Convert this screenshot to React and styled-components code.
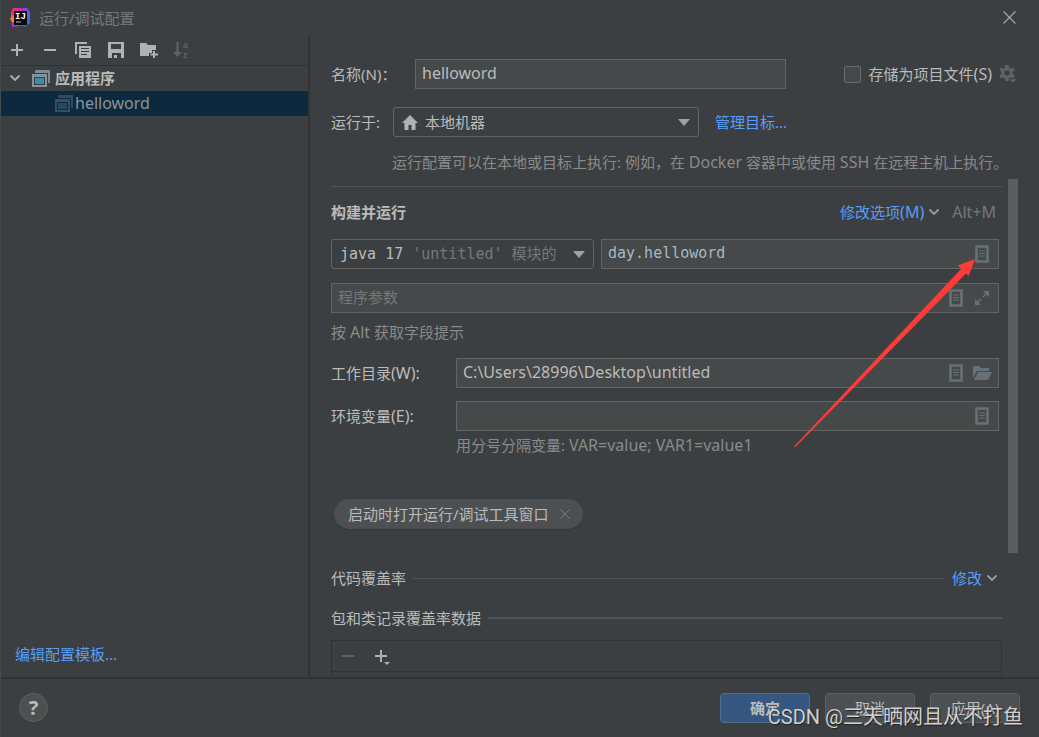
import React from "react";
import styled, { createGlobalStyle, css } from "styled-components";

const sans = `"Noto Sans", "Noto Sans CJK SC", sans-serif`;
const mono = `"DejaVu Sans Mono", "Noto Sans CJK SC", monospace`;
const c = {
  bg: "#3c3f41",
  field: "#45494a",
  line: "#323232",
  border: "#646464",
  rule: "#515456",
  text: "#bbbbbb",
  dim: "#8a8a8a",
  faint: "#777777",
  link: "#589df6",
  icon: "#afb1b3",
  fieldIcon: "#667177",
};

const GlobalStyle = createGlobalStyle`
  *, *::before, *::after { box-sizing: border-box; }
  body { margin: 0; background: ${c.bg}; color: ${c.text}; font: 15px/20px ${sans}; }
  button, input, select { font: inherit; color: inherit; margin: 0; }
  svg { display: block; flex: none; }
`;

const Dialog = styled.div`
  position: relative;
  display: flex;
  flex-direction: column;
  height: 100vh;
  overflow: hidden;
  background: ${c.bg};
  border-left: 1px solid #46494b;
  white-space: nowrap;
`;
const TitleBar = styled.header`
  display: flex;
  align-items: center;
  flex: none;
  height: 35px;
  padding: 0 20px 0 9px;
  color: ${c.faint};
`;
const TitleText = styled.h1`
  flex: 1;
  margin: 0 0 0 8px;
  font-size: 15px;
  font-weight: 400;
`;
const Latin = styled.span`
  font-size: 16px;
  line-height: 1;
`;
const IconButton = styled.button`
  display: flex;
  align-items: center;
  justify-content: center;
  flex: none;
  width: 20px;
  height: 20px;
  padding: 0;
  border: 0;
  background: none;
`;
const Body = styled.div`
  display: flex;
  flex: 1;
  min-height: 0;
`;
const Sidebar = styled.aside`
  display: flex;
  flex-direction: column;
  flex: 0 0 309px;
  border-right: 2px solid ${c.line};
`;
const Toolbar = styled.div`
  display: flex;
  align-items: center;
  gap: 13px;
  flex: none;
  height: 31px;
  padding-left: 6px;
  border-bottom: 1px solid ${c.line};
`;
const Tree = styled.ul`
  flex: 1;
  margin: 0;
  padding: 0;
  list-style: none;
`;
const TreeRow = styled.li`
  display: flex;
  align-items: center;
  height: 25px;
  padding-bottom: 1px;
  padding-left: ${(p) => (p.$child ? 54 : 8)}px;
  gap: ${(p) => (p.$child ? 2 : 5)}px;
  font-weight: ${(p) => (p.$child ? 400 : 700)};
  color: ${(p) => (p.$child ? "#8b949b" : c.text)};
  background: ${(p) => (p.$child ? "#0d293e" : "none")};
`;
const ChevronSlot = styled.span`
  width: 18px;
`;
const Link = styled.a`
  color: ${c.link};
  text-decoration: none;
`;
const SidebarFoot = styled.div`
  padding: 0 14px 13px;
`;

const Main = styled.main`
  display: flex;
  flex-direction: column;
  flex: 1;
  min-width: 0;
  padding: 24px 21px 0;
`;
const NameRow = styled.div`
  display: flex;
  align-items: center;
  flex: none;
`;
const Label = styled.label`
  flex: none;
  width: ${(p) => p.$width}px;
`;
const fieldBox = css`
  height: 30px;
  border: 1px solid ${c.border};
`;
const Field = styled.div`
  ${fieldBox}
  display: flex;
  align-items: center;
  flex: 1;
  gap: 6px;
  min-width: 0;
  padding: 0 6px;
  background: ${c.field};
`;
const Input = styled.input`
  flex: 1;
  min-width: 0;
  height: 28px;
  padding: 0 0 2px;
  border: 0;
  outline: 0;
  background: none;
  color: ${(p) => (p.$mono ? "#a9b7c6" : c.text)};
  font-family: ${(p) => (p.$mono ? mono : sans)};
  font-size: ${(p) => (p.$mono ? 15 : 16)}px;
  &::placeholder { color: ${c.faint}; opacity: 1; font-size: 15px; }
`;
const StoreLabel = styled.label`
  display: flex;
  align-items: center;
  gap: 8px;
  margin: 0 6px 0 58px;
`;
const Checkbox = styled.input`
  appearance: none;
  width: 17px;
  height: 17px;
  border: 1px solid #6b6b6b;
  border-radius: 2px;
  background: #43494a;
`;
const TargetRow = styled.div`
  display: flex;
  align-items: center;
  flex: none;
  margin-top: 18px;
`;
const Combo = styled.div`
  position: relative;
  flex: none;
  width: ${(p) => p.$width}px;
  margin-right: ${(p) => p.$gap}px;
`;
const Select = styled.select`
  ${fieldBox}
  appearance: none;
  width: 100%;
  padding: 0 30px 0 ${(p) => (p.$icon ? 31 : 8)}px;
  border-radius: 3px;
  background: ${c.bg};
  font-family: ${(p) => (p.$rich ? mono : sans)};
  color: ${(p) => (p.$rich ? "transparent" : c.text)};
  option { color: ${c.text}; }
`;
const ComboOverlay = styled.span`
  position: absolute;
  inset: 0;
  display: flex;
  align-items: center;
  justify-content: space-between;
  padding: 0 9px;
  pointer-events: none;
  font-family: ${mono};
`;
const Muted = styled.span`
  color: ${c.faint};
`;
const Hint = styled.p`
  flex: none;
  margin: ${(p) => p.$top}px 0 0 ${(p) => p.$indent || 0}px;
  color: ${c.dim};
`;

const ScrollPane = styled.div`
  display: flex;
  gap: 6px;
  flex: 1;
  min-height: 0;
  margin-top: 7px;
  overflow: hidden;
`;
const Content = styled.div`
  flex: 1;
  min-width: 0;
`;
const Thumb = styled.div`
  flex: none;
  width: 10px;
  height: 75%;
  background: #5b5d5e;
`;
const Separator = styled.hr`
  height: 1px;
  margin: 7px 0 15px;
  border: 0;
  background: ${c.rule};
`;
const SectionHead = styled.div`
  display: flex;
  align-items: center;
  padding-right: 6px;
`;
const SectionTitle = styled.h2`
  flex: 1;
  margin: 0;
  font-size: 15px;
  font-weight: 700;
`;
const Shortcut = styled(Latin)`
  margin-left: 12px;
  color: ${c.faint};
`;
const MenuLink = styled(Link)`
  display: flex;
  align-items: center;
  gap: 4px;
`;
const FormRow = styled.div`
  display: flex;
  align-items: center;
  margin-top: ${(p) => p.$top}px;
  padding-right: 3px;
`;
const Chip = styled.span`
  display: inline-flex;
  align-items: center;
  gap: 6px;
  height: 30px;
  margin: 44px 0 0 3px;
  padding: 0 8px 0 14px;
  border-radius: 15px;
  background: #4c5052;
  box-shadow: 0 1px 1px #35383a;
`;
const Group = styled.div`
  display: flex;
  align-items: center;
  gap: 7px;
  margin-top: ${(p) => p.$top}px;
  padding-right: ${(p) => (p.$link ? 4 : 0)}px;
`;
const GroupLine = styled.span`
  flex: 1;
  height: ${(p) => p.$weight}px;
  background: ${c.rule};
`;
const ListBox = styled.div`
  height: 120px;
  margin-top: 12px;
  border: 1px solid ${c.line};
`;

const Footer = styled.footer`
  display: flex;
  align-items: center;
  gap: 15px;
  flex: none;
  height: 60px;
  padding: 0 19px 1px 18px;
  border-top: 2px solid ${c.line};
`;
const HelpButton = styled.button`
  width: 29px;
  height: 29px;
  margin-right: auto;
  padding: 0;
  border: 1px solid #5e6060;
  border-radius: 50%;
  background: #4c5052;
  font-size: 20px;
  font-weight: 700;
`;
const Button = styled.button`
  width: 90px;
  height: 30px;
  padding: 0;
  border: 1px solid ${(p) => (p.$primary ? "#4c708c" : "#5e6060")};
  border-radius: 4px;
  background: ${(p) => (p.$primary ? "#365880" : "#4c5052")};
  font-weight: ${(p) => (p.$primary ? 700 : 400)};
`;
const Watermark = styled.div`
  position: absolute;
  right: 16px;
  bottom: 8px;
  font: 20px/24px Roboto, "Noto Sans CJK SC", sans-serif;
  color: #d0d0d0;
  text-shadow: 1px 1px 1px #222;
  pointer-events: none;
`;
const Arrow = styled.svg`
  position: absolute;
  top: 257px;
  right: 62px;
  pointer-events: none;
`;

const Logo = () => (
  <svg width="21" height="20" viewBox="0 0 21 20">
    <defs>
      <linearGradient id="warm" x1="0" y1="1" x2="1" y2="0">
        <stop offset="0" stopColor="#f97a12" />
        <stop offset="0.4" stopColor="#fe2857" />
        <stop offset="1" stopColor="#b82de0" />
      </linearGradient>
      <linearGradient id="cool" x1="0" y1="0" x2="0" y2="1">
        <stop offset="0" stopColor="#7a4be0" />
        <stop offset="1" stopColor="#087cfa" />
      </linearGradient>
    </defs>
    <path d="M13 0h4l3 4v11l-5 4-5-2V5z" fill="url(#cool)" />
    <path d="M3 0h8l4 4-5 9-6 1-3-2V5z" fill="url(#warm)" />
    <path d="M0 10l4-2v6l-2 1z" fill="#fc801d" />
    <path d="M2 15l5-2 5 4-2 1-8 1z" fill="#a33bd8" />
    <rect x="4" y="3" width="13" height="14" fill="#090909" />
    <text x="5" y="11" fill="#fff" fontSize="9" fontWeight="700" fontFamily="Liberation Mono">IJ</text>
    <path d="M6 14h5" stroke="#bbb" strokeWidth="1" />
  </svg>
);
const Close = ({ size, color }) => (
  <svg width={size} height={size} viewBox="0 0 12 12">
    <path d="M.5.5l11 11M11.5.5l-11 11" stroke={color} strokeWidth="1.2" />
  </svg>
);
const Plus = () => (
  <svg width="14" height="14"><path d="M7 1v12M1 7h12" stroke={c.icon} strokeWidth="2" /></svg>
);
const Minus = ({ color = c.icon }) => (
  <svg width="14" height="14"><path d="M1 7h12" stroke={color} strokeWidth="2" /></svg>
);
const Copy = () => (
  <svg width="16" height="16" viewBox="0 0 16 16">
    <path d="M1 12V1h11" fill="none" stroke={c.icon} strokeWidth="2" />
    <path fillRule="evenodd" fill={c.icon} d="M4 4h12v12H4zM6 6v1h8V6zM6 9v1h8V9zM6 12v1h6v-1z" />
  </svg>
);
const Save = () => (
  <svg width="16" height="16" viewBox="0 0 16 16">
    <path fillRule="evenodd" fill={c.icon} d="M0 0h16v16h-3v-5H4v5H0zM3 2v5h10V2z" />
    <path d="M6 13h3v3H6z" fill={c.icon} />
  </svg>
);
const FolderAdd = () => (
  <svg width="18" height="16" viewBox="0 0 18 16">
    <path fill={c.icon} d="M0 1h6l2 2h8v5h-4v3H9v3H0z" />
    <path d="M14 9v7M10.500 12.500h7.500" stroke={c.icon} strokeWidth="2" />
  </svg>
);
const SortAz = () => (
  <svg width="20" height="20" viewBox="0 0 20 20">
    <path d="M5.500 2v11" stroke="#606365" strokeWidth="2" />
    <path d="M1 12h9l-4.500 5z" fill="#606365" />
    <g fill="#606365" fontSize="9" fontWeight="700" fontFamily="Liberation Sans">
      <text x="11" y="8">a</text>
      <text x="11" y="18">z</text>
    </g>
  </svg>
);
const Chevron = ({ size = 12, color = "#9a9da0" }) => (
  <svg width={size} height={size} viewBox="0 0 12 12">
    <path d="M1.500 3.500L6 8l4.500-4.500" fill="none" stroke={color} strokeWidth="1.800" />
  </svg>
);
const AppIcon = ({ faded }) => (
  <svg width="18" height="17" viewBox="0 0 18 17" opacity={faded ? 0.35 : 1}>
    <path d="M3 0h15v13h-2V3H3z" fill="#7c8a93" />
    <path fillRule="evenodd" fill="#87949c" d="M0 4h15v13H0zM2 7v8h11V7z" />
    <rect x="3" y="8" width="9" height="6" fill="#3c8dad" />
  </svg>
);
const Home = () => (
  <svg width="16" height="15" viewBox="0 0 16 15">
    <path fill={c.icon} d="M8 0l8 8h-2.500v7H9.500v-5h-3v5H2.500V8H0z" />
  </svg>
);
const Triangle = () => (
  <svg width="12" height="7"><path d="M0 0h12L6 7z" fill="#9fa1a3" /></svg>
);
const Gear = () => (
  <svg width="18" height="18" viewBox="0 0 18 18" fill="none" stroke="#606365">
    <circle cx="8" cy="8" r="4.200" strokeWidth="3" />
    <path d="M8 0v3M8 13v3M1.100 4l2.600 1.500M12.300 10.500l2.600 1.500M1.100 12l2.600-1.500M12.300 5.500L14.900 4" strokeWidth="3.600" />
    <path d="M10 14h8l-4 4z" fill="#606365" stroke={c.bg} strokeWidth=".6" />
  </svg>
);
const Doc = () => (
  <svg width="14" height="18" viewBox="0 0 14 18">
    <path d="M1.500 1.500h11v15h-11z" fill="none" stroke={c.fieldIcon} strokeWidth="2.600" />
    <path d="M4 6h6M4 8.500h6M4 11h6" stroke={c.fieldIcon} strokeWidth="1.200" />
  </svg>
);
const Expand = () => (
  <svg width="16" height="16" viewBox="0 0 16 16" fill={c.fieldIcon} stroke={c.fieldIcon}>
    <path d="M9 1h6v6zM1 9v6h6z" stroke="none" />
    <path d="M9 7l4-4M3 13l4-4" strokeWidth="1.600" />
  </svg>
);
const FolderOpen = () => (
  <svg width="19" height="14" viewBox="0 0 19 14" fill={c.fieldIcon}>
    <path d="M0 0h6l2 2h8v3H4l-4 7z" />
    <path d="M5 6h14l-4 8H1z" />
  </svg>
);
const PlusMenu = () => (
  <svg width="18" height="18" viewBox="0 0 18 18">
    <path d="M9 3v12M3 9h12" stroke={c.icon} strokeWidth="2" />
    <path d="M12 15h6l-3 3z" fill={c.icon} />
  </svg>
);

const VarButton = () => (
  <IconButton aria-label="插入宏"><Doc /></IconButton>
);

export default function App() {
  return (
    <>
      <GlobalStyle />
      <Dialog role="dialog" aria-labelledby="title">
        <TitleBar>
          <Logo />
          <TitleText id="title">运行/调试配置</TitleText>
          <IconButton aria-label="关闭"><Close size={13} color="#a0a2a3" /></IconButton>
        </TitleBar>
        <Body>
          <Sidebar>
            <Toolbar>
              <IconButton aria-label="添加"><Plus /></IconButton>
              <IconButton aria-label="移除"><Minus /></IconButton>
              <IconButton aria-label="复制"><Copy /></IconButton>
              <IconButton aria-label="保存"><Save /></IconButton>
              <IconButton aria-label="新建文件夹"><FolderAdd /></IconButton>
              <IconButton aria-label="排序" disabled><SortAz /></IconButton>
            </Toolbar>
            <Tree>
              <TreeRow>
                <ChevronSlot><Chevron color={c.icon} /></ChevronSlot>
                <AppIcon />
                应用程序
              </TreeRow>
              <TreeRow $child>
                <AppIcon faded />
                <Latin>helloword</Latin>
              </TreeRow>
            </Tree>
            <SidebarFoot><Link href="#templates">编辑配置模板...</Link></SidebarFoot>
          </Sidebar>
          <Main>
            <NameRow>
              <Label htmlFor="name" $width={84}>名称(N)：</Label>
              <Field><Input id="name" defaultValue="helloword" /></Field>
              <StoreLabel>
                <Checkbox type="checkbox" />
                <span>存储为项目文件<Latin>(S)</Latin></span>
              </StoreLabel>
              <IconButton aria-label="存储设置"><Gear /></IconButton>
            </NameRow>
            <TargetRow>
              <Label htmlFor="target" $width={62}>运行于:</Label>
              <Combo $width={306} $gap={16}>
                <Select id="target" $icon><option>本地机器</option></Select>
                <ComboOverlay><Home /><Triangle /></ComboOverlay>
              </Combo>
              <Link href="#targets">管理目标...</Link>
            </TargetRow>
            <Hint $top={15} $indent={61}>
              运行配置可以在本地或目标上执行: 例如，在 <Latin>Docker</Latin> 容器中或使用 <Latin>SSH</Latin> 在远程主机上执行。
            </Hint>
            <ScrollPane>
              <Content>
                <Separator />
                <SectionHead>
                  <SectionTitle>构建并运行</SectionTitle>
                  <MenuLink href="#options"><span>修改选项<Latin>(M)</Latin></span> <Chevron /></MenuLink>
                  <Shortcut>Alt+M</Shortcut>
                </SectionHead>
                <FormRow $top={17}>
                  <Combo $width={263} $gap={7}>
                    <Select $rich aria-label="JRE"><option>java 17 'untitled' 模块的</option></Select>
                    <ComboOverlay aria-hidden="true">
                      <span>java 17 <Muted>'untitled' 模块的</Muted></span>
                      <Triangle />
                    </ComboOverlay>
                  </Combo>
                  <Field>
                    <Input $mono aria-label="主类" defaultValue="day.helloword" />
                    <VarButton />
                  </Field>
                </FormRow>
                <FormRow $top={14}>
                  <Field>
                    <Input aria-label="程序参数" placeholder="程序参数" />
                    <VarButton />
                    <IconButton aria-label="展开"><Expand /></IconButton>
                  </Field>
                </FormRow>
                <Hint $top={9}>按 <Latin>Alt</Latin> 获取字段提示</Hint>
                <FormRow $top={16}>
                  <Label htmlFor="dir" $width={125}>工作目录<Latin>(W):</Latin></Label>
                  <Field>
                    <Input id="dir" defaultValue="C:\Users\28996\Desktop\untitled" />
                    <VarButton />
                    <IconButton aria-label="浏览"><FolderOpen /></IconButton>
                  </Field>
                </FormRow>
                <FormRow $top={13}>
                  <Label htmlFor="env" $width={125}>环境变量<Latin>(E):</Latin></Label>
                  <Field>
                    <Input id="env" />
                    <VarButton />
                  </Field>
                </FormRow>
                <Hint $top={4} $indent={125}>用分号分隔变量: <Latin>VAR=value; VAR1=value1</Latin></Hint>
                <Chip>
                  启动时打开运行/调试工具窗口
                  <IconButton aria-label="移除选项"><Close size={10} color="#7b7e80" /></IconButton>
                </Chip>
                <Group $top={39} $link>
                  代码覆盖率
                  <GroupLine $weight={1} />
                  <MenuLink href="#coverage">修改 <Chevron /></MenuLink>
                </Group>
                <Group $top={20}>
                  包和类记录覆盖率数据
                  <GroupLine $weight={2} />
                </Group>
                <ListBox>
                  <Toolbar>
                    <IconButton aria-label="移除条目" disabled><Minus color="#606365" /></IconButton>
                    <IconButton aria-label="添加条目"><PlusMenu /></IconButton>
                  </Toolbar>
                </ListBox>
              </Content>
              <Thumb />
            </ScrollPane>
          </Main>
        </Body>
        <Footer>
          <HelpButton aria-label="帮助">?</HelpButton>
          <Button $primary>确定</Button>
          <Button>取消</Button>
          <Button>应用(A)</Button>
        </Footer>
        <Arrow width="184" height="192" viewBox="793 257 184 192">
          <path d="M975 259L957.500 265.500L961.500 268.500L794 446.500L795 447.500L966 273.500L968.700 276Z" fill="#fd3b38" />
        </Arrow>
        <Watermark>CSDN @三天晒网且从不打鱼</Watermark>
      </Dialog>
    </>
  );
}
